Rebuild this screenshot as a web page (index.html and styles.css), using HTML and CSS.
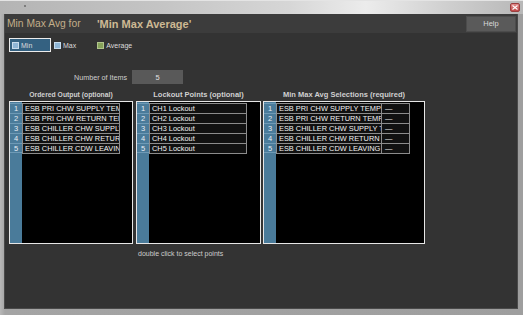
FILE: index.html
```html
<!DOCTYPE html>
<html>
<head>
<meta charset="utf-8">
<link rel="stylesheet" href="styles.css">
</head>
<body>
<div class="window">
  <div class="titlebar">
    <span class="app-dot"></span>
    <span class="close-btn"><svg width="6" height="5" viewBox="0 0 6 5"><path d="M0.5 0.5 L5.5 4.5 M5.5 0.5 L0.5 4.5" stroke="#fff" stroke-width="1.1"/></svg></span>
  </div>
  <div class="client">
    <div class="header">
      <span class="title">Min Max Avg for</span>
      <span class="title-name">'Min Max Average'</span>
      <button class="help">Help</button>
    </div>
    <div class="tabs">
      <div class="tab selected"><span class="chk blue"></span>Min</div>
      <div class="tab"><span class="chk blue"></span>Max</div>
      <div class="tab avg"><span class="chk green"></span>Average</div>
    </div>
    <div class="numrow">
      <span class="numlabel">Number of Items</span>
      <span class="numbox">5</span>
    </div>
    <div class="lists">
      <div class="col col1">
        <div class="colhead small">Ordered Output (optional)</div>
        <div class="box">
          <div class="rows">
            <div class="row"><span class="num">1</span><span class="cell w98">ESB PRI CHW SUPPLY TEMP</span></div>
            <div class="row"><span class="num">2</span><span class="cell w98">ESB PRI CHW RETURN TEMP</span></div>
            <div class="row"><span class="num">3</span><span class="cell w98">ESB CHILLER CHW SUPPLY TEMP</span></div>
            <div class="row"><span class="num">4</span><span class="cell w98">ESB CHILLER CHW RETURN TEMP</span></div>
            <div class="row"><span class="num">5</span><span class="cell w98">ESB CHILLER CDW LEAVING TEMP</span></div>
          </div>
        </div>
      </div>
      <div class="col col2">
        <div class="colhead">Lockout Points (optional)</div>
        <div class="box">
          <div class="rows">
            <div class="row"><span class="num">1</span><span class="cell w98">CH1 Lockout</span></div>
            <div class="row"><span class="num">2</span><span class="cell w98">CH2 Lockout</span></div>
            <div class="row"><span class="num">3</span><span class="cell w98">CH3 Lockout</span></div>
            <div class="row"><span class="num">4</span><span class="cell w98">CH4 Lockout</span></div>
            <div class="row"><span class="num">5</span><span class="cell w98">CH5 Lockout</span></div>
          </div>
        </div>
        <div class="hint">double click to select points</div>
      </div>
      <div class="col col3">
        <div class="colhead">Min Max Avg Selections (required)</div>
        <div class="box">
          <div class="rows">
            <div class="row"><span class="num">1</span><span class="cell w106">ESB PRI CHW SUPPLY TEMP</span><span class="cell dash">—</span></div>
            <div class="row"><span class="num">2</span><span class="cell w106">ESB PRI CHW RETURN TEMP</span><span class="cell dash">—</span></div>
            <div class="row"><span class="num">3</span><span class="cell w106">ESB CHILLER CHW SUPPLY TEMP</span><span class="cell dash">—</span></div>
            <div class="row"><span class="num">4</span><span class="cell w106">ESB CHILLER CHW RETURN TEMP</span><span class="cell dash">—</span></div>
            <div class="row"><span class="num">5</span><span class="cell w106">ESB CHILLER CDW LEAVING TEMP</span><span class="cell dash">—</span></div>
          </div>
        </div>
      </div>
    </div>
  </div>
</div>
</body>
</html>
```

FILE: styles.css
```css
html, body {
  margin: 0;
  padding: 0;
  background: #a9a9a9;
}
body {
  font-family: "Liberation Sans", Arial, sans-serif;
  width: 523px;
  height: 315px;
  overflow: hidden;
}
.window {
  width: 523px;
  height: 315px;
  display: flex;
  flex-direction: column;
  background: linear-gradient(to right, #b8b8b8 0, #a4a4a4 5px, #9e9e9e 100%);
  box-sizing: border-box;
}
.titlebar {
  height: 14px;
  flex: none;
  display: flex;
  align-items: flex-start;
  justify-content: space-between;
  background: linear-gradient(to right, #b4b4b4 0%, #c4c4c4 30%, #d6d6d6 55%, #ececec 70%, #d0d0d0 85%, #b8b8b8 100%);
  border-top: 1px solid #e4e4e4;
  box-sizing: border-box;
}
.app-dot {
  width: 2px;
  height: 2px;
  margin: 4px 0 0 24px;
  background: #6a6a6a;
  border-radius: 1px;
}
.close-btn {
  width: 10px;
  height: 9px;
  margin: 2px 3px 0 0;
  background: linear-gradient(#e08a8a, #c04848);
  border: 1px solid #9a4040;
  border-radius: 2px;
  box-sizing: border-box;
  display: flex;
  align-items: center;
  justify-content: center;
}
.client {
  flex: 1;
  margin: 0 5px 6px 4px;
  border: 1px solid #4a4a4a;
  border-top: none;
  background: #333333;
  display: flex;
  flex-direction: column;
  min-height: 0;
}
.header {
  height: 19px;
  flex: none;
  background: #3c3c3c;
  display: flex;
  align-items: center;
  padding-left: 2px;
}
.title {
  font-size: 10.3px;
  color: #c2ae8a;
  width: 90px;
}
.title-name {
  font-size: 11px;
  font-weight: bold;
  color: #cdb994;
}
.help {
  margin-left: auto;
  margin-right: 1px;
  width: 50px;
  height: 16px;
  background: #5a5a5a;
  border: 1px solid #4c4c4c;
  color: #d8d8d8;
  font-family: "Liberation Sans", Arial, sans-serif;
  font-size: 7.5px;
  padding: 0;
}
.tabs {
  display: flex;
  align-items: center;
  margin-top: 5px;
  padding-left: 4px;
  height: 14px;
}
.tab {
  display: flex;
  align-items: center;
  font-size: 7px;
  color: #dcdcdc;
  height: 14px;
  margin-right: 14px;
}
.tab.selected {
  width: 42px;
  box-sizing: border-box;
  border: 1px solid #ececec;
  background: #346181;
  padding-left: 2px;
  margin-right: 3px;
}
.tab.avg {
  margin-left: 7px;
}
.chk {
  width: 7px;
  height: 7px;
  box-sizing: border-box;
  margin-right: 2px;
}
.chk.blue {
  background: #8fb6d6;
  border: 1px solid #c8dcec;
}
.chk.green {
  background: #86a25a;
  border: 1px solid #b0c48c;
}
.numrow {
  display: flex;
  align-items: center;
  margin-top: 18px;
  padding-left: 69px;
  height: 14px;
}
.numlabel {
  font-size: 7.2px;
  color: #cfcfcf;
  width: 58px;
}
.numbox {
  width: 51px;
  height: 14px;
  background: #595959;
  color: #e0e0e0;
  font-size: 7.5px;
  display: flex;
  align-items: center;
  justify-content: center;
}
.lists {
  display: flex;
  padding-left: 4px;
  margin-top: 4px;
}
.col {
  display: flex;
  flex-direction: column;
}
.col1 { width: 124px; margin-right: 3px; }
.col2 { width: 125px; margin-right: 2px; }
.col3 { width: 162px; }
.colhead {
  height: 13px;
  line-height: 13px;
  text-align: center;
  font-size: 7.5px;
  font-weight: bold;
  color: #d0d0d0;
  white-space: nowrap;
}
.colhead.small {
  font-size: 6.8px;
}
.box {
  height: 143px;
  box-sizing: border-box;
  border: 1px solid #e6e6e6;
  background: linear-gradient(to right, #4a7b9a 0, #4a7b9a 12px, #000 12px);
  padding-top: 1px;
  overflow: hidden;
}
.rows {
  display: flex;
  flex-direction: column;
}
.row {
  display: flex;
  height: 10px;
}
.num {
  width: 12px;
  flex: none;
  box-sizing: border-box;
  border-top: 1px solid #6e9ab6;
  font-size: 7.5px;
  line-height: 9px;
  text-align: center;
  color: #e8eef4;
}
.row:last-child .num {
  border-bottom: 1px solid #6e9ab6;
}
.cell {
  flex: none;
  box-sizing: border-box;
  height: 10px;
  border: 1px solid #8c8c8c;
  border-bottom: none;
  background: #111;
  color: #f2f2f2;
  font-size: 7.4px;
  line-height: 9px;
  padding-left: 2px;
  white-space: nowrap;
  overflow: hidden;
}
.row:last-child .cell {
  height: 11px;
  border-bottom: 1px solid #8c8c8c;
}
.w98 { width: 98px; }
.w106 { width: 106px; }
.cell.dash {
  width: 28px;
  border-left: none;
  padding-left: 3px;
}
.hint {
  margin-top: 5px;
  padding-left: 2px;
  font-size: 7px;
  color: #cdcdcd;
  line-height: 10px;
}
```
